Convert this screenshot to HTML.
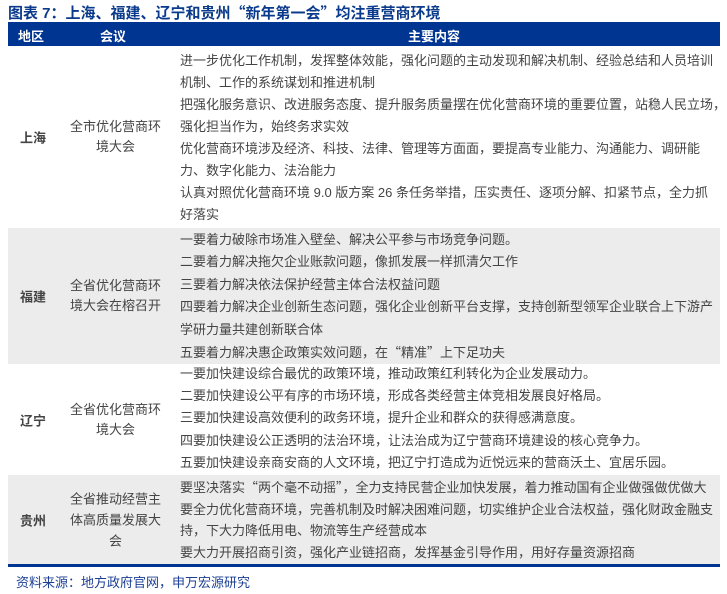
<!DOCTYPE html>
<html><head><meta charset="utf-8"><style>
body{margin:0;width:727px;height:594px;background:#fff;font-family:"Liberation Sans","Noto Sans CJK SC",sans-serif;position:relative;overflow:hidden}
.q{font-family:"Noto Sans CJK SC",sans-serif}
.title{position:absolute;left:8px;top:2px;font-size:15px;font-weight:bold;color:#0a3a8c;white-space:nowrap}
.hdr{position:absolute;left:8px;top:22px;width:712px;height:24px;background:#003591;color:#fff;font-weight:bold;font-size:13px}
.hdr span{position:absolute;top:4px}
.row{position:absolute;left:8px;width:712px;font-size:13px;color:#444}
.row .r{position:absolute;left:0;width:50px;text-align:center;font-weight:bold;top:50%;transform:translateY(-50%)}
.row .m{position:absolute;left:50px;width:115px;text-align:center;top:50%;transform:translateY(-50%)}
.row .c{position:absolute;left:172px;right:2px;white-space:nowrap}
.g{background:#ececec}
.bot{position:absolute;left:8px;top:564px;width:712px;height:3px;background:#003591}
.src{position:absolute;left:16px;top:572px;font-size:13px;color:#1c3f94}
</style></head><body>
<div class="title">图表 7：上海、福建、辽宁和贵州<span class="q">“新年第一会”</span>均注重营商环境</div>
<div class="hdr"><span style="left:10px">地区</span><span style="left:92px">会议</span><span style="left:400px">主要内容</span></div>

<div class="row" style="top:46px;height:182px">
<div class="r">上海</div><div class="m" style="line-height:20px">全市优化营商环<br>境大会</div>
<div class="c" style="top:4px;line-height:22px">进一步优化工作机制，发挥整体效能，强化问题的主动发现和解决机制、经验总结和人员培训<br>机制、工作的系统谋划和推进机制<br>把强化服务意识、改进服务态度、提升服务质量摆在优化营商环境的重要位置，站稳人民立场，<br>强化担当作为，始终务求实效<br>优化营商环境涉及经济、科技、法律、管理等方面面，要提高专业能力、沟通能力、调研能<br>力、数字化能力、法治能力<br>认真对照优化营商环境 9.0 版方案 26 条任务举措，压实责任、逐项分解、扣紧节点，全力抓<br>好落实</div></div>

<div class="row g" style="top:228px;height:136px">
<div class="r">福建</div><div class="m" style="line-height:20px">全省优化营商环<br>境大会在榕召开</div>
<div class="c" style="top:1px;line-height:22.4px">一要着力破除市场准入壁垒、解决公平参与市场竞争问题。<br>二要着力解决拖欠企业账款问题，像抓发展一样抓清欠工作<br>三要着力解决依法保护经营主体合法权益问题<br>四要着力解决企业创新生态问题，强化企业创新平台支撑，支持创新型领军企业联合上下游产<br>学研力量共建创新联合体<br>五要着力解决惠企政策实效问题，在<span class="q">“精准”</span>上下足功夫</div></div>

<div class="row" style="top:364px;height:111px">
<div class="r">辽宁</div><div class="m" style="line-height:20px">全省优化营商环<br>境大会</div>
<div class="c" style="top:-1px;line-height:22.2px">一要加快建设综合最优的政策环境，推动政策红利转化为企业发展动力。<br>二要加快建设公平有序的市场环境，形成各类经营主体竞相发展良好格局。<br>三要加快建设高效便利的政务环境，提升企业和群众的获得感满意度。<br>四要加快建设公正透明的法治环境，让法治成为辽宁营商环境建设的核心竞争力。<br>五要加快建设亲商安商的人文环境，把辽宁打造成为近悦远来的营商沃土、宜居乐园。</div></div>

<div class="row g" style="top:475px;height:89px">
<div class="r">贵州</div><div class="m" style="line-height:21px">全省推动经营主<br>体高质量发展大<br>会</div>
<div class="c" style="top:1px;line-height:21.5px">要坚决落实<span class="q">“两个毫不动摇”</span>，全力支持民营企业加快发展，着力推动国有企业做强做优做大<br>要全力优化营商环境，完善机制及时解决困难问题，切实维护企业合法权益，强化财政金融支<br>持，下大力降低用电、物流等生产经营成本<br>要大力开展招商引资，强化产业链招商，发挥基金引导作用，用好存量资源招商</div></div>

<div class="bot"></div>
<div class="src">资料来源：地方政府官网，申万宏源研究</div>
</body></html>
